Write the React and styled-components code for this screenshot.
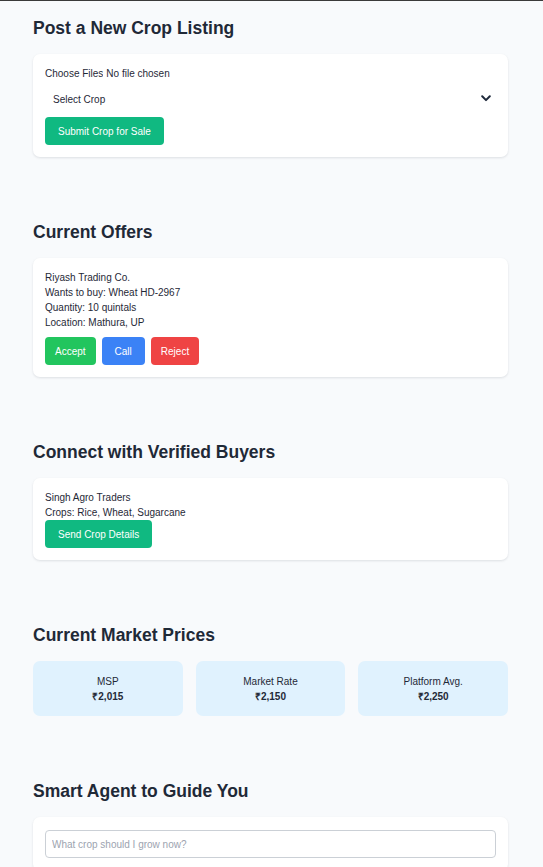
import React from "react";
import styled, { createGlobalStyle } from "styled-components";

const GlobalStyle = createGlobalStyle`
  * { box-sizing: border-box; }
  body {
    margin: 0;
    background: #f8fafc;
    font-family: "Liberation Sans", Arial, sans-serif;
    color: #1f2937;
    border-top: 1px solid #3a3a3a;
  }
`;

const Page = styled.div`
  padding: 16px 35px 40px 33px;
`;

const Section = styled.section`
  margin-bottom: 64px;
`;

const Title = styled.h2`
  margin: 0 0 15px;
  font-size: 17.5px;
  line-height: 22px;
  font-weight: 700;
  color: #1f2937;
`;

const Card = styled.div`
  background: #ffffff;
  border-radius: 7px;
  box-shadow: 0 1px 3px rgba(15, 23, 42, 0.08), 0 1px 2px rgba(15, 23, 42, 0.04);
  padding: ${(p) => p.$pad || "12px"};
  display: flex;
  flex-direction: column;
  align-items: flex-start;
  gap: ${(p) => p.$gap || "0px"};
  font-size: 10px;
  line-height: 15px;
`;

const FileInput = styled.input`
  font: inherit;
  color: #1f2937;
  height: 15px;
  line-height: 15px;
  &::file-selector-button {
    font: inherit;
    color: inherit;
    border: 0;
    background: transparent;
    padding: 0;
    margin: 0 3px 0 0;
  }
`;

const SelectWrap = styled.div`
  position: relative;
  width: 100%;
  svg {
    position: absolute;
    right: 5px;
    top: 9px;
    pointer-events: none;
  }
`;

const Select = styled.select`
  appearance: none;
  width: 100%;
  height: 26px;
  border: 0;
  background: transparent;
  font: inherit;
  color: #1f2937;
  padding: 0 8px;
  outline: none;
`;

const Line = styled.div`
  font-size: 10px;
  line-height: 15px;
`;

const ButtonRow = styled.div`
  display: flex;
  gap: 6px;
  margin-top: 7px;
`;

const colors = {
  emerald: "#10b981",
  green: "#22c55e",
  blue: "#3b82f6",
  red: "#ef4444",
};

const Button = styled.button`
  height: 28px;
  padding: 0 ${(p) => (p.$wide ? "13px" : "10px")};
  border: 0;
  border-radius: 4px;
  background: ${(p) => colors[p.$tone] || colors.emerald};
  color: #ffffff;
  font-family: inherit;
  font-size: 10px;
  line-height: 15px;
  cursor: pointer;
`;

const PriceGrid = styled.div`
  display: grid;
  grid-template-columns: repeat(3, 1fr);
  gap: 13px;
  margin-top: 1px;
`;

const PriceCard = styled.div`
  background: #e0f2fe;
  border-radius: 7px;
  padding: 12.5px 8px;
  text-align: center;
  font-size: 10px;
  line-height: 15px;
`;

const PriceValue = styled.div`
  font-weight: 700;
`;

const AgentInput = styled.input`
  width: 100%;
  height: 28px;
  border: 1px solid #cbd0d6;
  border-radius: 4px;
  padding: 0 6px;
  font-family: inherit;
  font-size: 10px;
  color: #1f2937;
  outline: none;
  &::placeholder {
    color: #9ca3af;
  }
`;

const Chevron = () => (
  <svg width="10" height="7" viewBox="0 0 10 7" fill="none">
    <path d="M1.2 1.3L5 5.1l3.8-3.8" stroke="#1e293b" strokeWidth="2" strokeLinecap="round" strokeLinejoin="round" />
  </svg>
);

const prices = [
  { label: "MSP", value: "₹2,015" },
  { label: "Market Rate", value: "₹2,150" },
  { label: "Platform Avg.", value: "₹2,250" },
];

export default function App() {
  return (
    <>
      <GlobalStyle />
      <Page>
        <Section>
          <Title>Post a New Crop Listing</Title>
          <Card $gap="5px">
            <FileInput type="file" multiple />
            <SelectWrap>
              <Select defaultValue="">
                <option value="">Select Crop</option>
                <option value="wheat">Wheat</option>
                <option value="rice">Rice</option>
              </Select>
              <Chevron />
            </SelectWrap>
            <Button $tone="emerald" $wide>Submit Crop for Sale</Button>
          </Card>
        </Section>

        <Section>
          <Title>Current Offers</Title>
          <Card>
            <Line>Riyash Trading Co.</Line>
            <Line>Wants to buy: Wheat HD-2967</Line>
            <Line>Quantity: 10 quintals</Line>
            <Line>Location: Mathura, UP</Line>
            <ButtonRow>
              <Button $tone="green">Accept</Button>
              <Button $tone="blue" $wide>Call</Button>
              <Button $tone="red">Reject</Button>
            </ButtonRow>
          </Card>
        </Section>

        <Section>
          <Title>Connect with Verified Buyers</Title>
          <Card>
            <Line>Singh Agro Traders</Line>
            <Line>Crops: Rice, Wheat, Sugarcane</Line>
            <Button $tone="emerald" $wide>Send Crop Details</Button>
          </Card>
        </Section>

        <Section>
          <Title>Current Market Prices</Title>
          <PriceGrid>
            {prices.map((p) => (
              <PriceCard key={p.label}>
                <div>{p.label}</div>
                <PriceValue>{p.value}</PriceValue>
              </PriceCard>
            ))}
          </PriceGrid>
        </Section>

        <Section>
          <Title>Smart Agent to Guide You</Title>
          <Card $pad="13px 12px">
            <AgentInput placeholder="What crop should I grow now?" />
          </Card>
        </Section>
      </Page>
    </>
  );
}
